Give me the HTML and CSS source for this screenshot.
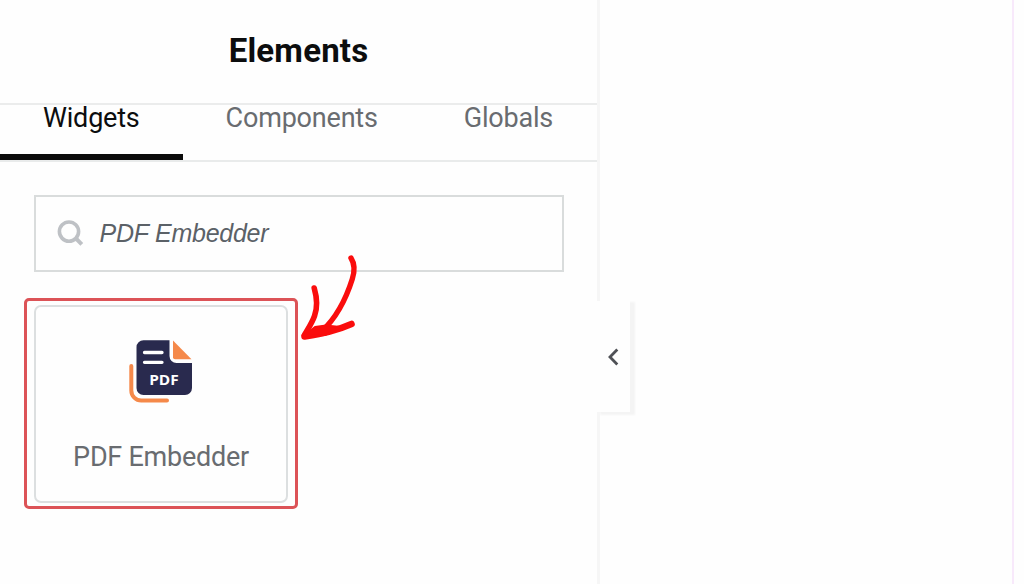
FILE: index.html
```html
<!DOCTYPE html>
<html lang="en">
<head>
<meta charset="utf-8">
<title>Elements</title>
<link rel="stylesheet" href="styles.css">
</head>
<body>
<div class="editor">
  <aside class="panel">
    <header class="panel-header"><h1 class="panel-title">Elements</h1></header>
    <nav class="tabs">
      <a class="tab tab-active">Widgets</a>
      <a class="tab">Components</a>
      <a class="tab">Globals</a>
    </nav>
    <div class="search">
      <svg class="search-icon" width="28" height="28" viewBox="0 0 28 28" fill="none" stroke="#bec1c5" stroke-width="3.6"><circle cx="12" cy="11.600" r="9.600"/><path d="M18.500 18l6.300 6.300" stroke-width="4"/></svg>
      <span class="search-text">PDF Embedder</span>
    </div>
    <div class="highlight">
      <div class="widget">
        <svg class="widget-icon" width="64" height="64" viewBox="0 0 64 64">
          <path d="M2.300 26v24.500a10 10 0 0 0 10 10H38" fill="none" stroke="#f5894a" stroke-width="4" stroke-linecap="round"/>
          <path d="M14 .3h26.500V16a7 7 0 0 0 7 7H63v25a7 7 0 0 1-7 7H14.500a7 7 0 0 1-7-7V7.300a7 7 0 0 1 7-7z" fill="#292a4e"/>
          <path d="M44 .5l18.500 18.700H46a2 2 0 0 1-2-2z" fill="#f5894a"/>
          <path d="M15.500 12.500h17.500M15.500 22.300h17.500" stroke="#fff" stroke-width="3.300" stroke-linecap="round"/>
          <text class="icon-text" x="20.200" y="44.500" textLength="29.500" lengthAdjust="spacingAndGlyphs">PDF</text>
        </svg>
        <span class="widget-name">PDF Embedder</span>
      </div>
    </div>
  </aside>
  <main class="canvas"></main>
  <button class="collapse" aria-label="Collapse panel">
    <svg width="12" height="18" viewBox="0 0 12 18" fill="none" stroke="#4f5156" stroke-width="2.800"><path d="M10.300 1.500L3 9l7.300 7.500"/></svg>
  </button>
  <svg class="arrow" width="62" height="92" viewBox="0 0 62 92" fill="none" stroke="#fa0d0d" stroke-linecap="round" stroke-linejoin="round">
    <path d="M14.200 35c2.600 9 4 18 .3 28C12 70 8.500 75 4.500 82" stroke-width="5.600"/>
    <path d="M51 5c3.500 5.500 4.200 12 1.300 21C46 46 36 65 22 78" stroke-width="5.400"/>
    <path d="M51.500 71C36 78 22 80.500 4.500 83.500" stroke-width="6.600"/>
    <path d="M4 83l11-9 11-1.500 14 1.500-15 8z" fill="#fa0d0d" stroke-width="2"/>
  </svg>
</div>
</body>
</html>
```
FILE: styles.css
```css
* { box-sizing: border-box; }
body {
  margin: 0;
  background: #fefefe;
  font-family: Roboto, "Liberation Sans", sans-serif;
}
.editor {
  position: relative;
  display: flex;
  width: 1024px;
  height: 584px;
  overflow: hidden;
}
.panel {
  width: 597px;
  flex: none;
  background: #fefefe;
}
.panel-header {
  height: 105px;
  padding-bottom: 1px;
  border-bottom: 2px solid #ebecec;
  display: flex;
  align-items: center;
  justify-content: center;
}
.panel-title {
  margin: 0;
  font-size: 33px;
  line-height: 40px;
  font-weight: 700;
  letter-spacing: .2px;
  color: #0c0d0e;
}
.tabs {
  height: 57px;
  display: flex;
  border-bottom: 2px solid #e9ebeb;
}
.tab {
  height: 55px;
  padding: 0 43px;
  font-size: 27px;
  line-height: 26px;
  letter-spacing: -.2px;
  color: #696c70;
  white-space: nowrap;
}
.tab-active {
  color: #0c0d0e;
  border-bottom: 6px solid #0b0b0b;
}
.search {
  width: 530px;
  height: 77px;
  margin: 33px 0 0 33.500px;
  padding-left: 21px;
  border: 2px solid #d9dcdc;
  display: flex;
  align-items: center;
  gap: 15px;
}
.search-text {
  margin-top: -2px;
  font: italic 25px/32px "Liberation Sans", Arial, sans-serif;
  letter-spacing: -.25px;
  color: #5b6167;
  white-space: nowrap;
}
.highlight {
  width: 274px;
  height: 211px;
  margin: 26px 0 0 24px;
  padding: 4px 7px;
  border: 3px solid #dc5357;
  border-radius: 5px;
}
.widget {
  width: 254px;
  height: 198px;
  border: 2px solid #dcdfe0;
  border-radius: 7px;
  display: flex;
  flex-direction: column;
  align-items: center;
  padding-top: 33px;
}
.widget-icon {
  flex: none;
  overflow: visible;
}
.icon-text {
  font: 700 14.500px "Open Sans", sans-serif;
  fill: #fff;
}
.widget-name {
  margin-top: 37px;
  font-size: 27px;
  line-height: 32px;
  letter-spacing: -.25px;
  color: #696c70;
  white-space: nowrap;
}
.canvas {
  width: 417px;
  border-left: 3px solid #f6f6f6;
  border-right: 2px solid #f8e9fb;
}
.collapse {
  position: absolute;
  left: 597px;
  top: 301px;
  width: 33px;
  height: 111px;
  padding: 0 2px 0 0;
  border: 0;
  background: #fefefe;
  box-shadow: 4px 2px 2px 1px #f4f4f4;
  clip-path: inset(0 -10px -8px 0);
  display: flex;
  align-items: center;
  justify-content: center;
}
.arrow {
  position: absolute;
  left: 300px;
  top: 253px;
}
```
